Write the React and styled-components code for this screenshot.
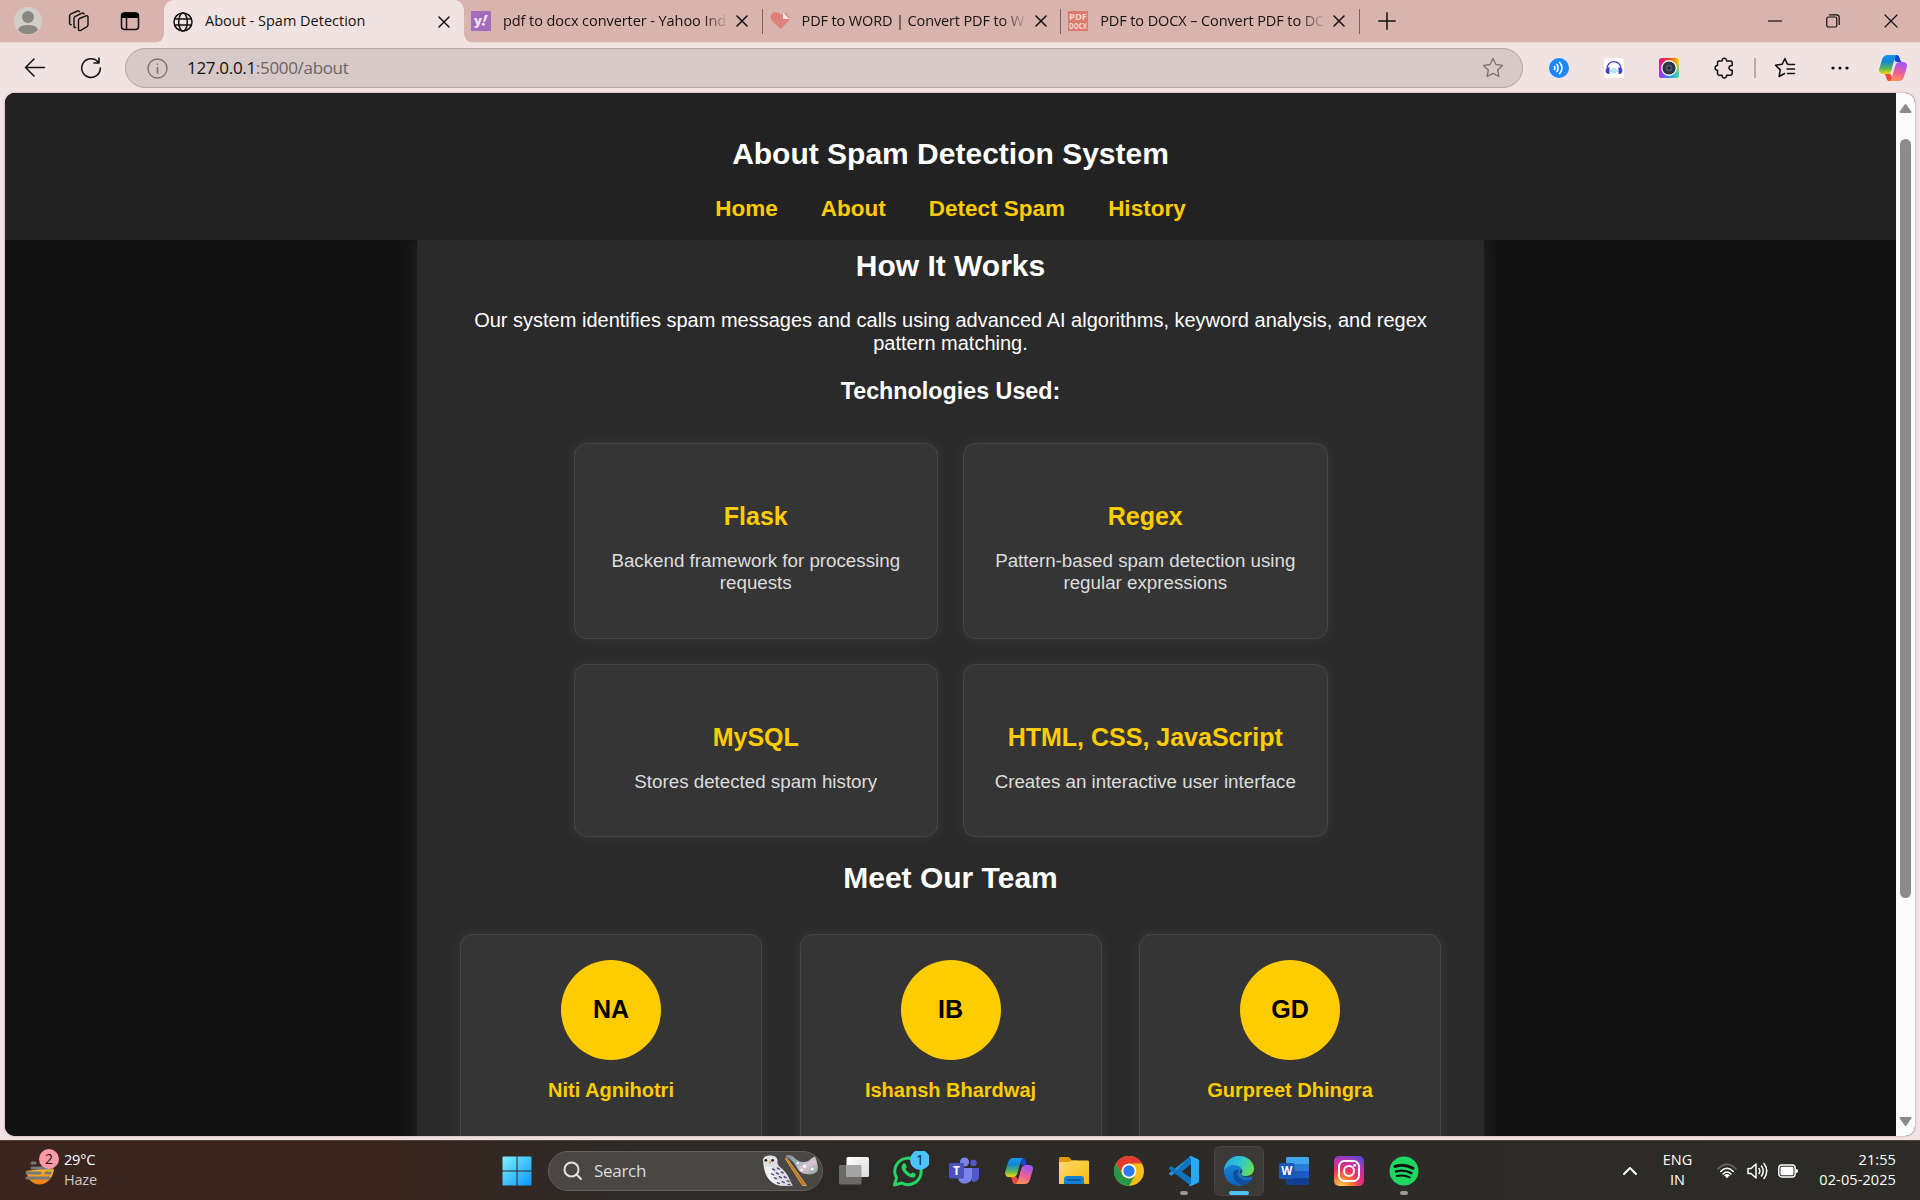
import React from "react";
import styled, { createGlobalStyle, css } from "styled-components";

const UI = `"Open Sans", "Noto Sans", sans-serif`;
const WEB = `"Liberation Sans", Arial, sans-serif`;

const GlobalStyle = createGlobalStyle`
  * { box-sizing: border-box; }
  html, body { margin: 0; padding: 0; overflow: hidden; }
  h1, h2, h3, h4, p { margin: 0; }
  svg { display: block; flex: none; }
`;

const Screen = styled.div`
  width: 1920px;
  height: 1200px;
  display: flex;
  flex-direction: column;
  overflow: hidden;
  font-family: ${UI};
`;

const Browser = styled.div`
  height: 1140px;
  display: flex;
  flex-direction: column;
  background: #f1e3e2;
`;

/* ---------- tab strip ---------- */
const TabStrip = styled.div`
  height: 42px;
  display: flex;
  align-items: stretch;
  background: #d9b4ae;
  box-shadow: 0 1px 0 #ecd2cf;
`;

const StripTools = styled.div`
  width: 164px;
  display: flex;
  align-items: center;
  padding-left: 14px;
`;

const ToolSlot = styled.span`
  display: flex;
  justify-content: center;
  width: ${(p) => p.$w}px;
`;

const ActiveTab = styled.div`
  position: relative;
  width: 300px;
  height: 43px;
  display: flex;
  align-items: center;
  padding-left: 9px;
  border-radius: 10px 10px 0 0;
  background: #f1e3e2;
  &::before, &::after {
    content: "";
    position: absolute;
    bottom: 0;
    width: 9px;
    height: 9px;
  }
  &::before { left: -9px; background: radial-gradient(circle at 0 0, transparent 8.5px, #f1e3e2 9px); }
  &::after { right: -9px; background: radial-gradient(circle at 100% 0, transparent 8.5px, #f1e3e2 9px); }
`;

const Tab = styled.div`
  width: 297.6px;
  flex: none;
  display: flex;
  align-items: center;
  padding-left: 7px;
`;

const TabTitle = styled.span`
  width: 223px;
  margin-left: 12px;
  overflow: hidden;
  white-space: nowrap;
  font-size: 14.5px;
  line-height: 22px;
  letter-spacing: ${(p) => p.$ls || 0}px;
  color: #151210;
  margin-top: -1px;
  ${(p) => p.$fade && css`mask-image: linear-gradient(90deg, #000 200px, transparent 226px);`}
`;

const TabClose = styled.span`
  display: flex;
  margin-left: 10px;
`;

const TabDivider = styled.span`
  width: 1px;
  height: 25px;
  margin-top: 9px;
  background: #80605c;
`;

const NewTab = styled.span`
  display: flex;
  align-items: center;
  margin-left: 18px;
`;

const WindowButtons = styled.div`
  margin-left: auto;
  display: flex;
  align-items: center;
`;

/* ---------- toolbar ---------- */
const Toolbar = styled.div`
  height: 51px;
  display: flex;
  align-items: center;
`;

const NavButton = styled.span`
  width: 56px;
  display: flex;
  justify-content: center;
  &:first-child { margin-left: 7px; }
`;

const AddressBar = styled.div`
  width: 1398px;
  height: 40px;
  margin-left: 6px;
  margin-top: 1px;
  padding: 0 18px 0 21px;
  display: flex;
  align-items: center;
  border: 1px solid #b3a4a3;
  border-radius: 20px;
  background: #d7c9c8;
`;

const Url = styled.span`
  margin: -2px 0 0 19px;
  flex: 1;
  font-size: 17px;
  letter-spacing: -0.32px;
  color: #6c6463;
  b { font-weight: 400; color: #111; }
`;

const ToolbarDivider = styled.span`
  width: 2px;
  height: 20px;
  background: #bbacab;
`;

/* ---------- page ---------- */
const Viewport = styled.div`
  height: 1043px;
  margin: 0 5px;
  display: flex;
  border-radius: 10px;
  overflow: hidden;
  background: #121212;
  box-shadow: 0 0 2px rgba(80, 50, 50, 0.5);
`;

const Page = styled.div`
  width: 1891px;
  display: flex;
  flex-direction: column;
  align-items: center;
  overflow: hidden;
  background: #121212;
  font-family: ${WEB};
  text-align: center;
  color: #fff;
`;

const SiteHeader = styled.header`
  width: 100%;
  height: 147px;
  flex: none;
  padding-top: 44px;
  z-index: 1;
  background: #222;
`;

const Title = styled.h1`
  font-size: 30px;
  line-height: 34px;
`;

const SiteNav = styled.nav`
  display: flex;
  justify-content: center;
  gap: 43px;
  margin-top: 25px;
`;

const SiteLink = styled.a`
  font-size: 22.5px;
  line-height: 26px;
  font-weight: 700;
  color: #fc0;
`;

const Content = styled.main`
  width: 1067px;
  flex: none;
  height: 960px;
  padding: 9px 42px 0;
  background: #2a2a2a;
  box-shadow: 0 0 18.75px rgba(255, 255, 255, 0.1);
`;

const SectionTitle = styled.h2`
  font-size: 30px;
  line-height: 34px;
`;

const Intro = styled.p`
  margin-top: 26px;
  font-size: 20px;
  line-height: 23px;
`;

const SubTitle = styled.h3`
  margin-top: 23px;
  font-size: 23.3px;
  line-height: 27px;
`;

const Card = styled.div`
  border: 1px solid #464646;
  border-radius: 12.5px;
  background: #353535;
  box-shadow: 0 0 12.5px rgba(255, 255, 255, 0.07);
`;

const TechGrid = styled.div`
  width: 754px;
  margin: 38px auto 24px;
  display: grid;
  grid-template-columns: 1fr 1fr;
  grid-template-rows: 196px 173px;
  gap: 25px;
`;

const TechCard = styled(Card)`
  padding: 58px 25px 0;
`;

const TechName = styled.h3`
  font-size: 25px;
  line-height: 29px;
  color: #fc0;
`;

const TechText = styled.p`
  margin-top: 19px;
  font-size: 18.75px;
  line-height: 22px;
  color: #ddd;
`;

const TeamRow = styled.div`
  margin-top: 39px;
  display: flex;
  justify-content: center;
  gap: 37.5px;
`;

const MemberCard = styled(Card)`
  width: 302px;
  height: 250px;
  padding-top: 25px;
  display: flex;
  flex-direction: column;
  align-items: center;
`;

const Avatar = styled.div`
  width: 100px;
  height: 100px;
  padding-bottom: 2px;
  display: flex;
  align-items: center;
  justify-content: center;
  border-radius: 50%;
  background: #fc0;
  font-size: 25px;
  font-weight: 700;
  color: #000;
`;

const MemberName = styled.h4`
  margin-top: 19px;
  font-size: 20px;
  line-height: 23px;
  color: #fc0;
`;

const Scrollbar = styled.div`
  width: 19px;
  display: flex;
  flex-direction: column;
  align-items: center;
  padding: 10px 0 9px;
  background: #fcfcfc;
`;

const Thumb = styled.div`
  width: 11px;
  height: 759px;
  margin: 26px 0 auto;
  border-radius: 6px;
  background: #8b8b8b;
`;

/* ---------- taskbar ---------- */
const Taskbar = styled.div`
  height: 60px;
  display: flex;
  align-items: center;
  border-top: 1px solid #4a4340;
  background: linear-gradient(90deg, #3a241e 0, #38251e 390px, #2d2a27 620px, #2c2b28 100%);
  color: #fff;
`;

const Weather = styled.div`
  width: 489px;
  display: flex;
  align-items: center;
  padding: 0 0 2px 24px;
  > svg { margin-bottom: 5px; }
`;

const WeatherText = styled.div`
  margin-left: 4px;
  font-size: 14.5px;
  line-height: 20px;
  letter-spacing: -0.2px;
  span { display: block; color: #d0c9c6; }
`;

const SearchPill = styled.div`
  width: 275px;
  height: 40px;
  margin: 0 3px 0 4px;
  padding: 0 3px 0 14px;
  display: flex;
  align-items: center;
  border: 1px solid #63605e;
  border-radius: 20px;
  background: #4a4643;
  font-size: 17px;
  letter-spacing: -0.3px;
  color: #dedbd9;
  span { flex: 1; margin-left: 11px; }
`;

const AppSlot = styled.div`
  position: relative;
  width: 55px;
  height: 50px;
  display: flex;
  align-items: center;
  justify-content: center;
  &::before {
    content: "";
    position: absolute;
    inset: 0 2.5px;
    border-radius: 6px;
    ${(p) => p.$active && css`background: #3b3a37; border: 1px solid #454441;`}
  }
  &::after {
    content: "";
    position: absolute;
    bottom: 1px;
    width: ${(p) => (p.$active ? 20 : 8)}px;
    height: 4px;
    border-radius: 2px;
    background: ${(p) => (p.$active ? "#4cc2ff" : p.$running ? "#9b9a98" : "transparent")};
  }
  svg { position: relative; }
`;

const Tray = styled.div`
  margin-left: auto;
  display: flex;
  align-items: center;
  padding-right: 24px;
`;

const TrayText = styled.div`
  padding-bottom: 2px;
  font-size: 14.5px;
  line-height: 20px;
  letter-spacing: ${(p) => p.$ls || 0}px;
  text-align: ${(p) => p.$align};
  width: ${(p) => p.$w}px;
  white-space: nowrap;
`;

const TrayIcons = styled.div`
  display: flex;
  align-items: center;
  gap: 10px;
`;

/* ---------- icons ---------- */
const line = { fill: "none", stroke: "#111", strokeWidth: 1.5, strokeLinecap: "round", strokeLinejoin: "round" };

const CloseIcon = ({ s = 10, w = 1.5 }) => (
  <svg width={s + 2} height={s + 2} viewBox={`-1 -1 ${s + 2} ${s + 2}`} {...line} strokeWidth={w}>
    <path d={`M0 0 ${s} ${s}M${s} 0 0 ${s}`} />
  </svg>
);

const ProfileIcon = () => (
  <svg width="28" height="28" viewBox="0 0 28 28">
    <circle cx="14" cy="14" r="14" fill="#d1cfca" />
    <circle cx="14" cy="10" r="6" fill="#8b8783" />
    <path d="M4 23c1-4 5-5 10-5s9 1 10 5a14 14 0 0 1-20 0z" fill="#8b8783" />
  </svg>
);

const WorkspacesIcon = () => (
  <svg width="22" height="22" viewBox="0 0 22 22" {...line} strokeWidth="1.4">
    <path d="M12.500 8.500 19 5.800c1.200-.4 2 .2 2 1.300v7.600c0 1-.5 1.700-1.300 2.100l-6 3.600c-1.200.6-2.200 0-2.200-1.200v-8.700c0-1 .3-1.600 1-2z" />
    <path d="M8.700 17.600c-1 .2-1.700-.4-1.700-1.400V8.400c0-1 .5-1.700 1.400-2.100L15 3.200c1-.4 1.700 0 2 .8" />
    <path d="M4.200 14.700c-1 .1-1.600-.5-1.600-1.500V5.900c0-1 .5-1.700 1.400-2.100L10.500 1c1-.4 1.600 0 2 .7" />
  </svg>
);

const TabActionsIcon = () => (
  <svg width="20" height="19" viewBox="0 0 20 19">
    <rect x="1.500" y="1" width="17" height="16.500" rx="3" {...line} />
    <path d="M1 6V4a3.500 3.500 0 0 1 3.500-3.500h11A3.500 3.500 0 0 1 19 4v2z" fill="#000" />
    <path d="M6.500 6v11" {...line} />
  </svg>
);

const GlobeIcon = () => (
  <svg width="20" height="20" viewBox="0 0 20 20" {...line} strokeWidth="1.500">
    <circle cx="10" cy="10" r="9" />
    <ellipse cx="10" cy="10" rx="4.300" ry="9" />
    <path d="M1.700 7h16.600M1.700 13h16.600" />
  </svg>
);

const YahooIcon = () => (
  <svg width="20" height="20" viewBox="0 0 20 20">
    <rect width="20" height="20" fill="#a56bbd" />
    <text x="3" y="14" fontSize="13" fontWeight="800" fontFamily={UI} fill="#f1e3f4">y</text>
    <path d="M12 11l2-7h3l-3 7z" fill="#f1e3f4" />
    <circle cx="12.400" cy="13.200" r="1.500" fill="#f1e3f4" />
  </svg>
);

const HeartIcon = () => (
  <svg width="20" height="20" viewBox="0 0 20 20">
    <path d="M10.500 18C7 14.500 4 12 2 9.500-1.200 5.500 1.500 1.200 5.500 1.200c2.500 0 4.500 1 6 2.800C12.500 3 13.500 2 16 2l3.500 4.500c0 2.500-1 3.500-2.500 5z" fill="#e0807a" />
    <path d="M13 1.500l6.500 6.500H13z" fill="#f7e6e4" />
  </svg>
);

const PdfIcon = () => (
  <svg width="20" height="20" viewBox="0 0 20 20">
    <rect width="20" height="20" fill="#dc7a6c" />
    <g fontFamily={UI} fontWeight="700" fill="#f6dcd7">
      <text x="1" y="9" fontSize="9" textLength="18" lengthAdjust="spacingAndGlyphs">PDF</text>
      <text x="1" y="17.500" fontSize="8" textLength="18" lengthAdjust="spacingAndGlyphs">DOCX</text>
    </g>
  </svg>
);

const BackIcon = () => (
  <svg width="22" height="20" viewBox="0 0 22 20" {...line}>
    <path d="M20.500 9.500H1.500M10 1 1.500 9.500 10 18" />
  </svg>
);

const ReloadIcon = () => (
  <svg width="22" height="22" viewBox="0 0 22 22" {...line}>
    <path d="M18.500 5.600A9.300 9.300 0 1 0 20.300 11M19 1v5h-5" />
  </svg>
);

const InfoIcon = () => (
  <svg width="21" height="21" viewBox="0 0 21 21" {...line} stroke="#7d7473" strokeWidth="1.400">
    <circle cx="10.500" cy="10.500" r="9.500" />
    <path d="M10.500 9.500v5.500M10.500 6v.2" strokeWidth="1.700" />
  </svg>
);

const starPath = "M11 1.500l2.900 6 6.600.9-4.800 4.600 1.200 6.500L11 16.400l-5.900 3.100 1.200-6.500L1.500 8.400l6.600-.9z";
const StarIcon = () => (
  <svg width="22" height="22" viewBox="0 0 22 22" {...line} stroke="#7d7473" strokeWidth="1.400">
    <path d={starPath} />
  </svg>
);

const WaveIcon = () => (
  <svg width="20" height="20" viewBox="0 0 20 20">
    <circle cx="10" cy="10" r="10" fill="#1c86fb" />
    <g fill="none" stroke="#fff" strokeWidth="1.600" strokeLinecap="round">
      <path d="M5.500 8.500q.9 1.500 0 3M8 6.500q2.200 3.500 0 7M10.500 4.300q5 5.700 0 11.400" />
    </g>
  </svg>
);

const HeadphoneIcon = () => (
  <svg width="20" height="20" viewBox="0 0 20 20">
    <rect width="20" height="20" rx="3" fill="#fff" />
    <path d="M3 12C2 .800 18 .800 17 12" fill="none" stroke="#4440c8" strokeWidth="1.300" />
    <path d="M5.500 9v7C.2 16.300.2 9.500 5.500 9zM14.500 9v7c5.300.3 5.300-6.500 0-7z" fill="#4440c8" />
    <path d="M7 11.500v2.500M9 10v5.500M11 10v5.500M13 11.500v2.500" stroke="#7fd4f5" strokeWidth="1.200" />
  </svg>
);

const LensIcon = () => (
  <svg width="20" height="20" viewBox="0 0 20 20">
    <defs>
      <linearGradient id="lensA" x1="0" y1="0" x2="1" y2="0">
        <stop offset="0" stopColor="#e0139c" /><stop offset=".5" stopColor="#f7370b" /><stop offset="1" stopColor="#f3d80a" />
      </linearGradient>
      <linearGradient id="lensB" x1="0" y1="0" x2="1" y2="0">
        <stop offset="0" stopColor="#b42cf0" /><stop offset=".5" stopColor="#2a8ff0" /><stop offset="1" stopColor="#35e0a0" />
      </linearGradient>
      <linearGradient id="lensM" x1="0" y1="0" x2="0" y2="1">
        <stop offset=".2" stopColor="#fff" stopOpacity="0" /><stop offset=".8" stopColor="#fff" />
      </linearGradient>
      <mask id="lensK"><rect width="20" height="20" fill="url(#lensM)" /></mask>
    </defs>
    <rect width="20" height="20" rx="3" fill="url(#lensA)" />
    <rect width="20" height="20" rx="3" fill="url(#lensB)" mask="url(#lensK)" />
    <circle cx="10" cy="10" r="7.900" fill="#fff" />
    <circle cx="10" cy="10" r="6.600" fill="#2f363f" />
    <circle cx="10" cy="10" r="3.500" fill="#46586a" />
    <circle cx="10" cy="10" r="1.500" fill="#1b2631" />
  </svg>
);

const PuzzleIcon = () => (
  <svg width="20" height="22" viewBox="0 0 20 22" {...line}>
    <path d="M5 4h3c-.3-3.600 4.900-3.600 4.600 0H16.500c1 0 1.700.7 1.700 1.700V8.500c-4.300-.6-4.300 5.300 0 4.700v3.300c0 1-.7 1.700-1.700 1.700h-3.900c.3 3.600-4.900 3.600-4.600 0H5.200c-1 0-1.700-.7-1.700-1.700v-3.300c-3.200.2-3.200-4.900 0-4.700V5.700C3.500 4.700 4 4 5 4z" />
  </svg>
);

const FavoritesIcon = () => (
  <svg width="22" height="22" viewBox="0 0 22 22" {...line}>
    <path d="M14.500 7.200 13.200 6.900 11 1.500 8.200 7.200 1.500 8.200l4.800 4.700-1.200 6.600 5.500-3M14.500 7.500h6M13 12h7.500M13.500 16.500h7" />
  </svg>
);

const DotsIcon = () => (
  <svg width="18" height="4" viewBox="0 0 18 4" fill="#111">
    <circle cx="2" cy="2" r="1.600" /><circle cx="9" cy="2" r="1.600" /><circle cx="16" cy="2" r="1.600" />
  </svg>
);

const CopilotIcon = ({ id }) => (
  <svg width="28" height="26" viewBox="0 0 28 26">
    <defs>
      <linearGradient id={`${id}a`} x1="0" y1="0" x2="0" y2="1">
        <stop offset="0" stopColor="#1498ee" /><stop offset=".35" stopColor="#1287d0" /><stop offset=".7" stopColor="#5cb55b" /><stop offset="1" stopColor="#f5d50c" />
      </linearGradient>
      <linearGradient id={`${id}b`} x1=".3" y1="0" x2="0" y2="1">
        <stop offset="0" stopColor="#a855f0" /><stop offset=".5" stopColor="#f2618d" /><stop offset="1" stopColor="#fba04e" />
      </linearGradient>
    </defs>
    <path d="M15 0h2.500c2.500 0 2.800 2 3.600 4.500.6 2 1.400 2.500 3 2.500H18c-3 0-3.700-7-3-7z" fill="#1a46d0" />
    <path d="M13 26h-2.500c-2.500 0-2.800-2-3.600-4.500C6.300 19.500 5.500 18.500 4 18.500h6c3 0 3.700 7.500 3 7.500z" fill="#ef4a3c" />
    <path d="M8.500 0H19c-2 0-2.700 1.500-3.400 4l-3 10.500c-.8 3-2 4.500-5 4.500H4c-3 0-4.700-2-3.700-5.500L3 4.500C4 1.500 5.500 0 8.500 0z" fill={`url(#${id}a)`} />
    <path d="M19.500 26H10c2 0 2.300-1.500 3-4l3-10.500c.8-3 2-4.500 5-4.500h3c3 0 4.700 2 3.700 5.500l-2.700 9C24 24.500 22.500 26 19.500 26z" fill={`url(#${id}b)`} />
  </svg>
);

const Arrow = ({ down }) => (
  <svg width="13" height="10" viewBox="0 0 13 10">
    <path d={down ? "M1.500 1h10l-5 7z" : "M1.500 9h10l-5-7z"} fill="#8b8b8b" stroke="#8b8b8b" strokeWidth="2" strokeLinejoin="round" />
  </svg>
);

const HazeIcon = () => (
  <svg width="36" height="38" viewBox="0 0 36 38">
    <defs>
      <linearGradient id="sun" x1="0" y1="0" x2="0" y2="1"><stop offset="0" stopColor="#fbb62c" /><stop offset="1" stopColor="#ec7c13" /></linearGradient>
    </defs>
    <path d="M2 23C4 32 9 36.500 15.500 36.500S29 31 30 21H17z" fill="url(#sun)" />
    <path d="M8 15h3M8 20h20M3 25h13M22 25h4M3 30h22" stroke="#77797c" strokeWidth="3" strokeLinecap="round" />
    <circle cx="25" cy="11" r="10" fill="#ff99a4" />
    <text x="25" y="16" textAnchor="middle" fontSize="14" fontFamily={UI} fill="#1d1013">2</text>
  </svg>
);

const WindowsIcon = () => (
  <svg width="30" height="30" viewBox="0 0 30 30">
    <defs><linearGradient id="win" x1="0" y1="0" x2="1" y2="1"><stop offset="0" stopColor="#7df1ff" /><stop offset="1" stopColor="#0a94fb" /></linearGradient></defs>
    <path d="M1.500 .500H14.500V14.500H.500V1.500a1 1 0 0 1 1-1zM15.500 .500h13a1 1 0 0 1 1 1v13h-14zM.500 15.500h14v14h-13a1 1 0 0 1-1-1zM15.500 15.500h14v13a1 1 0 0 1-1 1h-13z" fill="url(#win)" />
  </svg>
);

const SearchIcon = () => (
  <svg width="20" height="20" viewBox="0 0 20 20" fill="none" stroke="#e4e4e4" strokeWidth="2" strokeLinecap="round">
    <circle cx="8.500" cy="8.500" r="7" /><path d="M13.500 13.500 18 18" />
  </svg>
);

const OwlIcon = () => (
  <svg width="58" height="34" viewBox="0 0 60 34">
    <defs><linearGradient id="cloth" x1="0" y1="0" x2="1" y2="1"><stop offset="0" stopColor="#8d86a5" /><stop offset=".35" stopColor="#8fb1b3" /><stop offset=".6" stopColor="#dcc3d0" /><stop offset="1" stopColor="#84a9a5" /></linearGradient></defs>
    <path d="M2 6c0-4 4-5 8-5s8 2 7 7c-.3 3 3 5 7 9 5 5 5 9 9 15-9 1-16 1-21-3C5 24 3 17 2 6z" fill="#dedee5" />
    <path d="M3 9c2 5 6 4 8 3 3 8 5 13 11 20-10 0-18-7-19-23z" fill="#f5f4f5" opacity=".8" />
    <g stroke="#545077" strokeWidth="1.600" strokeLinecap="round">
      <path d="M12 15l2 1M17 14l2 1M11 20l2 1M16 19l2 1M21 18l2 1M14 24l2 1M19 23l2 1M24 23l2 1M17 29l2 1M22 28l2 1M27 27l2 1M28 31l2 0" />
    </g>
    <circle cx="5" cy="6" r="1.400" fill="#251e22" /><circle cx="12" cy="6" r="1.400" fill="#251e22" />
    <path d="M8 7l1.500 3L11 7z" fill="#df9b32" />
    <path d="M25 4l18 28h4L27 4z" fill="#b97825" stroke="#dda440" strokeWidth="1" />
    <path d="M25 2c3-3 7-1.500 10 1.500 3 3 7 5 11 4 4-.5 6-4.500 10-5.500 1.500 5 5 13 1 16.500-5 3.500-15 2.500-18.500-3C35 9.500 32 4.500 25 2z" fill="url(#cloth)" />
    <g fill="#fff"><circle cx="38" cy="9" r="1.200" /><circle cx="45" cy="12" r="1.600" /><circle cx="53" cy="15" r="1.400" /><circle cx="42" cy="16" r="1.200" /></g>
  </svg>
);

const TaskViewIcon = () => (
  <svg width="30" height="28" viewBox="0 0 30 28">
    <defs><linearGradient id="tv" x1="0" y1="0" x2="1" y2="1"><stop offset="0" stopColor="#fff" /><stop offset="1" stopColor="#dcdcdc" /></linearGradient></defs>
    <rect y="8" width="22.500" height="19.500" rx="1.500" fill="#6b6a68" />
    <rect x="7.500" width="22.500" height="20" rx="1.500" fill="url(#tv)" />
    <path d="M7.500 8H22.500V20H9a1.500 1.500 0 0 1-1.500-1.500z" fill="#a4a4a3" />
  </svg>
);

const WhatsAppIcon = () => (
  <svg width="40" height="40" viewBox="0 1 40 40">
    <path d="M5.500 35l2-7.200a13.200 13.200 0 1 1 5.300 5.200z" fill="none" stroke="#25d366" strokeWidth="3" strokeLinejoin="round" />
    <path d="M13.500 14.500c1-1.500 2.700-1.500 3.200-.3l1 2.600c.3.900-1.200 1.800-1 2.500 1 2 2.600 3.500 4.700 4.400.9.200 1.700-1.500 2.500-1.300l2.500 1.300c1 .6.300 2.500-.8 3.200-2 1.200-4.500.4-7-1.200-2.500-1.700-4.500-3.800-5.500-6.200-.8-2-.6-3.500.4-5z" fill="#25d366" />
    <circle cx="31" cy="10" r="10" fill="#4cc2ff" />
    <text x="31" y="15.200" textAnchor="middle" fontSize="14.500" fontFamily={UI} fill="#0b2332">1</text>
  </svg>
);

const TeamsIcon = () => (
  <svg width="30" height="28" viewBox="0 0 30 28">
    <circle cx="24.500" cy="6" r="3.200" fill="#5059c9" />
    <path d="M21 11h9v8.500c0 4.500-4 6-7 5z" fill="#5059c9" />
    <circle cx="15.500" cy="5" r="4.600" fill="#7b83eb" />
    <path d="M9 11h14v9c0 8-14 9.500-14 0z" fill="#7b83eb" />
    <rect y="6" width="15" height="15.500" rx="1.500" fill="#4a53bc" />
    <text x="7.500" y="18" textAnchor="middle" fontSize="12" fontWeight="700" fontFamily={UI} fill="#fff">T</text>
  </svg>
);

const FolderIcon = () => (
  <svg width="30" height="27" viewBox="0 0 30 27">
    <defs><linearGradient id="fold" x1="0" y1="0" x2="1" y2="1"><stop offset="0" stopColor="#ffdc6a" /><stop offset="1" stopColor="#f8b90f" /></linearGradient></defs>
    <path d="M0 1.500C0 .500.500 0 1.500 0h7c1 0 1.700.3 2.300 1L13 3.500h5V9H0z" fill="#dd9b08" />
    <path d="M0 5h10l3-1.500h15.500c1 0 1.500.5 1.500 1.500V27H0z" fill="url(#fold)" />
    <path d="M5 27v-5c0-2 1-3 3-3h14c2 0 3 1 3 3v5z" fill="#1582d3" />
    <path d="M9 23h12" stroke="#0b4f91" strokeWidth="1.600" strokeLinecap="round" />
  </svg>
);

const ChromeIcon = () => (
  <svg width="30" height="30" viewBox="0 0 30 30">
    <circle cx="15" cy="15" r="15" fill="#f9bd13" />
    <path d="M2 7.500A15 15 0 0 1 28 7.500H15a7.500 7.500 0 0 0-6.500 11.250z" fill="#e33b2e" />
    <path d="M2 7.500 8.500 18.750A7.500 7.500 0 0 0 15 22.500 7.500 7.500 0 0 0 21.500 18.750L15 30A15 15 0 0 1 2 7.500z" fill="#27984a" />
    <circle cx="15" cy="15" r="7.300" fill="#fff" /><circle cx="15" cy="15" r="5.700" fill="#2c7bee" />
  </svg>
);

const VSCodeIcon = () => (
  <svg width="30" height="30" viewBox="0 0 30 30">
    <path d="M22 0 8 14.500 2.500 10.300.4 11.500c-.5.400-.5 1.200 0 1.700L22 30v-8L12 15z" transform="matrix(1 0 0 -1 0 30)" fill="#2191da" />
    <path d="M22 0 8 14.500 2.500 10.300.4 11.500c-.5.400-.5 1.200 0 1.700L22 30v-8L12 15l10-7z" fill="#1173bd" />
    <path d="M22 0 8.500 13.500l3.500 3L22 8z" fill="#1173bd" />
    <path d="M22 0l6.800 3c.8.400 1.200 1 1.200 1.800v20.400c0 .8-.4 1.400-1.200 1.800L22 30c-.8.200-1.300-.2-2-1l2-1.500v-25L20 1c.7-.8 1.200-1.200 2-1z" fill="#29a9f3" />
  </svg>
);

const EdgeIcon = () => (
  <svg width="30" height="30" viewBox="0 0 30 30">
    <defs>
      <linearGradient id="edgeT" x1="0" y1=".3" x2="1" y2=".6"><stop offset="0" stopColor="#28a9e0" /><stop offset=".5" stopColor="#2fc6d3" /><stop offset="1" stopColor="#65e04f" /></linearGradient>
      <linearGradient id="edgeL" x1="0" y1="0" x2="0" y2="1"><stop offset="0" stopColor="#1b8ddd" /><stop offset="1" stopColor="#0c66be" /></linearGradient>
    </defs>
    <circle cx="15" cy="15" r="15" fill="url(#edgeL)" />
    <path d="M9 18c0 6 5 11 11 11 4-1 7-4 8-6-4 2-9 2-12-1-2.500-2.200-3-5-1-8-3-1-6 1-6 4z" fill="#104d9b" />
    <path d="M17 14c-1.500 2-1 4.500 1.500 6 3 1.500 8 1.500 10 .5l3-3V9L20 10z" fill="#3b3a37" />
    <path d="M0 14.500C1 5.500 7.500 0 15 0c8.500 0 15 6 15 12.500 0 4.500-3.300 7.500-8 7.500-2.500 0-4.800-.7-4.800-1.800 0-.6 1.100-1.200 1.100-3.200 0-3-3.300-6-8.300-6C5.500 9 2 11 0 14.500z" fill="url(#edgeT)" />
  </svg>
);

const WordIcon = () => (
  <svg width="30" height="28" viewBox="0 0 30 28">
    <path d="M7 1.500C7 .500 7.500 0 8.500 0h20c1 0 1.500.5 1.500 1.500V7H7z" fill="#41a5ee" />
    <path d="M7 7h23v7H7z" fill="#2b7cd3" /><path d="M7 14h23v7H7z" fill="#185abd" />
    <path d="M7 21h23v5.500c0 1-.5 1.500-1.500 1.500h-20c-1 0-1.500-.5-1.500-1.500z" fill="#103f91" />
    <rect y="6" width="15.500" height="16" rx="1.500" fill="#1a57b7" />
    <text x="7.700" y="18" textAnchor="middle" fontSize="11.500" fontWeight="700" fontFamily={UI} fill="#fff">W</text>
  </svg>
);

const InstagramIcon = () => (
  <svg width="30" height="30" viewBox="0 0 30 30">
    <defs><radialGradient id="ig" cx=".25" cy="1.050" r="1.150"><stop offset="0" stopColor="#ffd65c" /><stop offset=".3" stopColor="#fa7b35" /><stop offset=".55" stopColor="#ea2f68" /><stop offset=".8" stopColor="#b933b5" /><stop offset="1" stopColor="#6248d1" /></radialGradient></defs>
    <rect width="30" height="30" rx="5" fill="url(#ig)" />
    <g fill="none" stroke="#fff" strokeWidth="2"><rect x="5" y="5" width="20" height="20" rx="5.500" /><circle cx="15" cy="15" r="5" /></g>
    <circle cx="20.700" cy="9.300" r="1.400" fill="#fff" />
  </svg>
);

const SpotifyIcon = () => (
  <svg width="30" height="30" viewBox="0 0 30 30">
    <circle cx="15" cy="15" r="14.500" fill="#1ed760" />
    <g fill="none" stroke="#111" strokeLinecap="round"><path d="M6 10.500q9-3 18 1.800" strokeWidth="3" /><path d="M7 15.500q8-2.300 15.500 1.600" strokeWidth="2.400" /><path d="M7.800 20q7-1.700 13 1.400" strokeWidth="2" /></g>
  </svg>
);

const ChevronIcon = () => (
  <svg width="16" height="10" viewBox="0 0 16 10" fill="none" stroke="#fff" strokeWidth="2" strokeLinecap="round" strokeLinejoin="round"><path d="M2 8l6-6 6 6" /></svg>
);
const WifiIcon = () => (
  <svg width="20" height="16" viewBox="0 0 20 16" fill="none" stroke="#fff" strokeWidth="1.500" strokeLinecap="round">
    <path d="M1 6q9-9.500 18 0" stroke="#6b6a68" /><path d="M3.700 8.500q6.300-6.500 12.600 0M6 11q4-4 8 0" /><circle cx="10" cy="13.500" r="1.400" fill="#fff" stroke="none" />
    <path d="M8 12.500q2-1.500 4 0" />
  </svg>
);
const SpeakerIcon = () => (
  <svg width="21" height="18" viewBox="0 0 21 18" fill="none" stroke="#fff" strokeWidth="1.500" strokeLinecap="round" strokeLinejoin="round">
    <path d="M1 6.500h3l5-4.500v14l-5-4.500H1zM12 6.500q1.700 2.500 0 5M14.500 4q3.500 5 0 10M17 1.500q5.500 7.500 0 15" />
  </svg>
);
const BatteryIcon = () => (
  <svg width="20" height="14" viewBox="0 0 20 14">
    <rect x=".8" y="1" width="16.400" height="12" rx="3" fill="none" stroke="#fff" strokeWidth="1.400" /><rect x="2.500" y="2.800" width="13" height="8.400" rx="1.300" fill="#fff" /><path d="M18 5c1.300 0 2 .8 2 2s-.7 2-2 2z" fill="#fff" />
  </svg>
);

const TABS = [
  { icon: YahooIcon, title: "pdf to docx converter - Yahoo India", ls: -0.07 },
  { icon: HeartIcon, title: "PDF to WORD | Convert PDF to Word", ls: -0.13 },
  { icon: PdfIcon, title: "PDF to DOCX – Convert PDF to DOCX", ls: -0.1 },
];

const LINKS = ["Home", "About", "Detect Spam", "History"];

const TECH = [
  ["Flask", "Backend framework for processing requests"],
  ["Regex", "Pattern-based spam detection using regular expressions"],
  ["MySQL", "Stores detected spam history"],
  ["HTML, CSS, JavaScript", "Creates an interactive user interface"],
];

const TEAM = [
  ["NA", "Niti Agnihotri"],
  ["IB", "Ishansh Bhardwaj"],
  ["GD", "Gurpreet Dhingra"],
];

const APPS = [
  { icon: TaskViewIcon },
  { icon: WhatsAppIcon },
  { icon: TeamsIcon },
  { icon: () => <CopilotIcon id="task" /> },
  { icon: FolderIcon },
  { icon: ChromeIcon },
  { icon: VSCodeIcon, running: true },
  { icon: EdgeIcon, active: true },
  { icon: WordIcon },
  { icon: InstagramIcon },
  { icon: SpotifyIcon, running: true },
];

export default function App() {
  return (
    <Screen>
      <GlobalStyle />
      <Browser>
        <TabStrip>
          <StripTools>
            <ToolSlot $w={28}><ProfileIcon /></ToolSlot>
            <ToolSlot $w={71}><WorkspacesIcon /></ToolSlot>
            <ToolSlot $w={34}><TabActionsIcon /></ToolSlot>
          </StripTools>
          <ActiveTab>
            <GlobeIcon />
            <TabTitle>About - Spam Detection</TabTitle>
            <TabClose><CloseIcon /></TabClose>
          </ActiveTab>
          {TABS.map(({ icon: Icon, title, ls }) => (
            <React.Fragment key={title}>
              <Tab>
                <Icon />
                <TabTitle $fade $ls={ls}>{title}</TabTitle>
                <TabClose><CloseIcon /></TabClose>
              </Tab>
              <TabDivider />
            </React.Fragment>
          ))}
          <NewTab>
            <svg width="18" height="18" viewBox="0 0 18 18" {...line}><path d="M9 .800v16.400M.800 9h16.400" /></svg>
          </NewTab>
          <WindowButtons>
            <ToolSlot $w={58}><svg width="14" height="2" viewBox="0 0 14 2"><path d="M0 1h14" stroke="#111" strokeWidth="1.200" /></svg></ToolSlot>
            <ToolSlot $w={58}>
              <svg width="14" height="14" viewBox="0 0 14 14" {...line} strokeWidth="1.200">
                <rect x=".8" y="3" width="10" height="10" rx="1.500" /><path d="M3.500 .800h7a2.700 2.700 0 0 1 2.700 2.700v7" />
              </svg>
            </ToolSlot>
            <ToolSlot $w={58}><CloseIcon s={12} w={1.2} /></ToolSlot>
          </WindowButtons>
        </TabStrip>

        <Toolbar>
          <NavButton><BackIcon /></NavButton>
          <NavButton><ReloadIcon /></NavButton>
          <AddressBar>
            <InfoIcon />
            <Url><b>127.0.0.1</b>:5000/about</Url>
            <StarIcon />
          </AddressBar>
          <ToolSlot $w={72}><WaveIcon /></ToolSlot>
          <ToolSlot $w={38}><HeadphoneIcon /></ToolSlot>
          <ToolSlot $w={72}><LensIcon /></ToolSlot>
          <ToolSlot $w={38}><PuzzleIcon /></ToolSlot>
          <ToolSlot $w={24}><ToolbarDivider /></ToolSlot>
          <ToolSlot $w={36}><FavoritesIcon /></ToolSlot>
          <ToolSlot $w={73}><DotsIcon /></ToolSlot>
          <ToolSlot $w={34}><CopilotIcon id="bar" /></ToolSlot>
        </Toolbar>

        <Viewport>
          <Page>
            <SiteHeader>
              <Title>About Spam Detection System</Title>
              <SiteNav>{LINKS.map((l) => <SiteLink key={l}>{l}</SiteLink>)}</SiteNav>
            </SiteHeader>
            <Content>
              <SectionTitle>How It Works</SectionTitle>
              <Intro>
                Our system identifies spam messages and calls using advanced AI algorithms, keyword analysis, and regex pattern matching.
              </Intro>
              <SubTitle>Technologies Used:</SubTitle>
              <TechGrid>
                {TECH.map(([name, text]) => (
                  <TechCard key={name}>
                    <TechName>{name}</TechName>
                    <TechText>{text}</TechText>
                  </TechCard>
                ))}
              </TechGrid>
              <SectionTitle>Meet Our Team</SectionTitle>
              <TeamRow>
                {TEAM.map(([initials, name]) => (
                  <MemberCard key={name}>
                    <Avatar>{initials}</Avatar>
                    <MemberName>{name}</MemberName>
                  </MemberCard>
                ))}
              </TeamRow>
            </Content>
          </Page>
          <Scrollbar>
            <Arrow />
            <Thumb />
            <Arrow down />
          </Scrollbar>
        </Viewport>
      </Browser>

      <Taskbar>
        <Weather>
          <HazeIcon />
          <WeatherText>29°C<span>Haze</span></WeatherText>
        </Weather>
        <AppSlot><WindowsIcon /></AppSlot>
        <SearchPill>
          <SearchIcon />
          <span>Search</span>
          <OwlIcon />
        </SearchPill>
        {APPS.map(({ icon: Icon, running, active }, i) => (
          <AppSlot key={i} $running={running} $active={active}><Icon /></AppSlot>
        ))}
        <Tray>
          <ChevronIcon />
          <TrayText $align="center" $w={79}>ENG<br />IN</TrayText>
          <TrayIcons>
            <WifiIcon />
            <SpeakerIcon />
            <BatteryIcon />
          </TrayIcons>
          <TrayText $align="right" $w={98} $ls={0.1}>21:55<br />02-05-2025</TrayText>
        </Tray>
      </Taskbar>
    </Screen>
  );
}
